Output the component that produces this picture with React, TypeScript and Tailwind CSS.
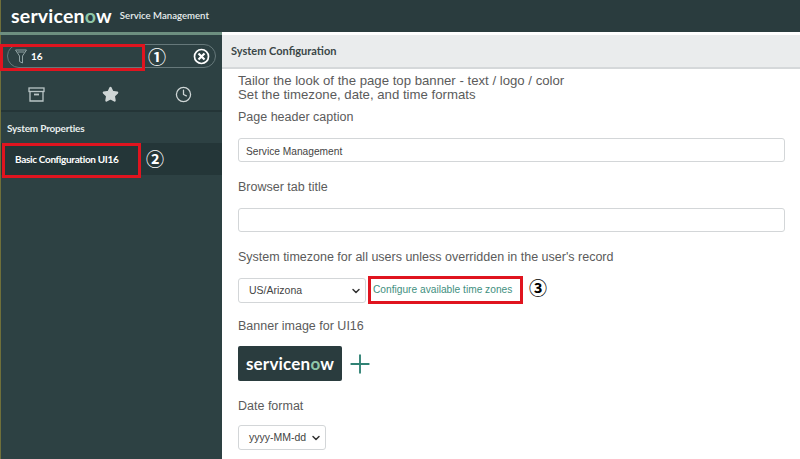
import { ChevronDown, Clock, Plus, Star } from "lucide-react";

const FieldLabel = ({ text }: { text: string }) => (
  <div className="text-[12.5px] leading-[17px] text-[#5b5b5b]">{text}</div>
);

const TextBox = ({ value }: { value?: string }) => (
  <div className="h-[24px] w-[547px] rounded-[3px] border border-[#d3d6d8] bg-white pl-[7px] text-[10.2px] leading-[25px] text-[#444]">
    {value}
  </div>
);

const SelectBox = ({ value, width }: { value: string; width: string }) => (
  <div className={`flex h-[25px] items-center justify-between whitespace-nowrap rounded-[3px] border border-[#d3d6d8] bg-white pl-[10px] pr-[3px] text-[10.5px] text-[#444] ${width}`}>
    <span>{value}</span>
    <ChevronDown size={12} strokeWidth={3} className="text-[#333]" />
  </div>
);

const Logo = ({ size }: { size: string }) => (
  <span className={`font-['Lato',sans-serif] font-bold tracking-[0.2px] text-white ${size}`}>
    servicen<span className="text-[#8fc7a8]">o</span>w
  </span>
);

const App = () => {
  return (
    <div className="relative flex h-[459px] w-[800px] flex-col overflow-hidden bg-white font-['Liberation_Sans',sans-serif]">
      <header className="flex h-[32px] items-center border-l border-[#6f6f3a] bg-[#2a3c3e] pl-[10px]">
        <Logo size="text-[19.5px] leading-[24px]" />
        <span className="ml-[8px] font-['Lato',sans-serif] text-[9.6px] font-semibold text-[#e8eeee]">Service Management</span>
      </header>
      <div className="h-[3px] w-[222px] bg-[#6d8f80]" />

      <div className="flex flex-1">
        <aside className="flex w-[222px] flex-col border-l border-[#6f6f3a] bg-[#2d4143] font-['Lato',sans-serif] text-white">
          <div className="px-[6px] pt-[9px]">
            <div className="flex h-[24px] items-center justify-between rounded-full border border-[#66787a] pl-[7px] pr-[4px]">
              <div className="flex items-center gap-[4px]">
                <svg width="12" height="17" viewBox="0 0 12 17" fill="none" stroke="#8fa2a3" strokeWidth="1">
                  <path d="M0.500 2h11L7.500 8v7l-3-1.500V8z" />
                  <path d="M2.500 4h7" />
                </svg>
                <span className="text-[10px] font-bold">16</span>
              </div>
              <svg width="17" height="17" viewBox="0 0 17 17" fill="none" stroke="#fff" strokeWidth="1.700" className="mr-[1px]">
                <circle cx="8.500" cy="8.500" r="7" />
                <path d="M5.500 5.500l6 6M11.500 5.500l-6 6" strokeWidth="2.200" />
              </svg>
            </div>
          </div>

          <div className="mt-[13px] flex h-[26px] items-center justify-between pl-[27px] pr-[30px]">
            <svg width="17" height="15" viewBox="0 0 17 15" fill="none" stroke="#b9c5c6" strokeWidth="1.300">
              <rect x="1" y="1" width="15" height="3.500" />
              <path d="M2 4.500V14h13V4.500" />
              <path d="M6 7.500h5" strokeWidth="1.800" />
            </svg>
            <Star size={17} fill="#cfd6d6" stroke="#cfd6d6" />
            <Clock size={17} strokeWidth={1.800} className="text-[#cfd6d6]" />
          </div>

          <div className="mt-[3px] h-[2px] bg-[#243537]" />

          <div className="pl-[6px] pt-[10px] text-[10px] font-bold leading-[12px] tracking-[-0.2px] text-[#e8eeee]">System Properties</div>
          <div className="mt-[9px] h-[32px] bg-[#243638] pl-[14px] text-[10px] font-bold leading-[32px] tracking-[-0.33px]">Basic Configuration UI16</div>
        </aside>

        <main className="flex flex-1 flex-col">
          <div className="h-[34px] border-b-2 border-[#d5d8da] bg-[#eaeced] pl-[9px] font-['Lato',sans-serif] text-[11px] font-bold leading-[32px] text-[#3a4647]">
            System Configuration
          </div>
          <div className="flex flex-col pl-[16px] pt-[5px]">
            <div className="text-[13.2px] leading-[14px] text-[#5b5b5b]">
              <div>Tailor the look of the page top banner - text / logo / color</div>
              <div>Set the timezone, date, and time formats</div>
            </div>
            <div className="mt-[7px]"><FieldLabel text="Page header caption" /></div>
            <div className="mt-[12px]"><TextBox value="Service Management" /></div>
            <div className="mt-[17px]"><FieldLabel text="Browser tab title" /></div>
            <div className="mt-[12px]"><TextBox /></div>
            <div className="mt-[17px]"><FieldLabel text="System timezone for all users unless overridden in the user's record" /></div>
            <div className="mt-[12px] flex items-center">
              <SelectBox value="US/Arizona" width="w-[128px]" />
              <span className="ml-[7px] -translate-y-[1px] text-[10.2px] text-[#3f8f80]">Configure available time zones</span>
            </div>
            <div className="mt-[15px]"><FieldLabel text="Banner image for UI16" /></div>
            <div className="mt-[11px] flex items-center">
              <div className="flex h-[35px] w-[104px] items-center justify-center rounded-[2px] bg-[#2a3c3e]">
                <Logo size="text-[17px] leading-[20px]" />
              </div>
              <Plus size={30} strokeWidth={1.500} className="ml-[3px] text-[#2f8274]" />
            </div>
            <div className="mt-[17px]"><FieldLabel text="Date format" /></div>
            <div className="mt-[10px]"><SelectBox value="yyyy-MM-dd" width="w-[88px]" /></div>
          </div>
        </main>
      </div>

      {/* red callouts drawn over the screenshot */}
      <div className="absolute left-0 top-[44px] h-[27px] w-[145px] border-[3px] border-[#e0141f]" />
      <div className="absolute left-[2px] top-[143px] h-[35px] w-[139px] border-[3px] border-[#e0141f]" />
      <div className="absolute left-[368px] top-[276px] h-[28px] w-[155px] border-[3px] border-[#e0141f]" />
      <span className="absolute left-[148px] top-[45px] font-['Noto_Sans_CJK_JP',sans-serif] text-[18px] font-bold leading-[22px] text-white">①</span>
      <span className="absolute left-[146px] top-[147px] font-['Noto_Sans_CJK_JP',sans-serif] text-[18px] font-bold leading-[22px] text-white">②</span>
      <span className="absolute left-[529px] top-[276px] font-['Noto_Sans_CJK_JP',sans-serif] text-[18px] font-bold leading-[22px] text-black">③</span>
    </div>
  );
};

export default App;
